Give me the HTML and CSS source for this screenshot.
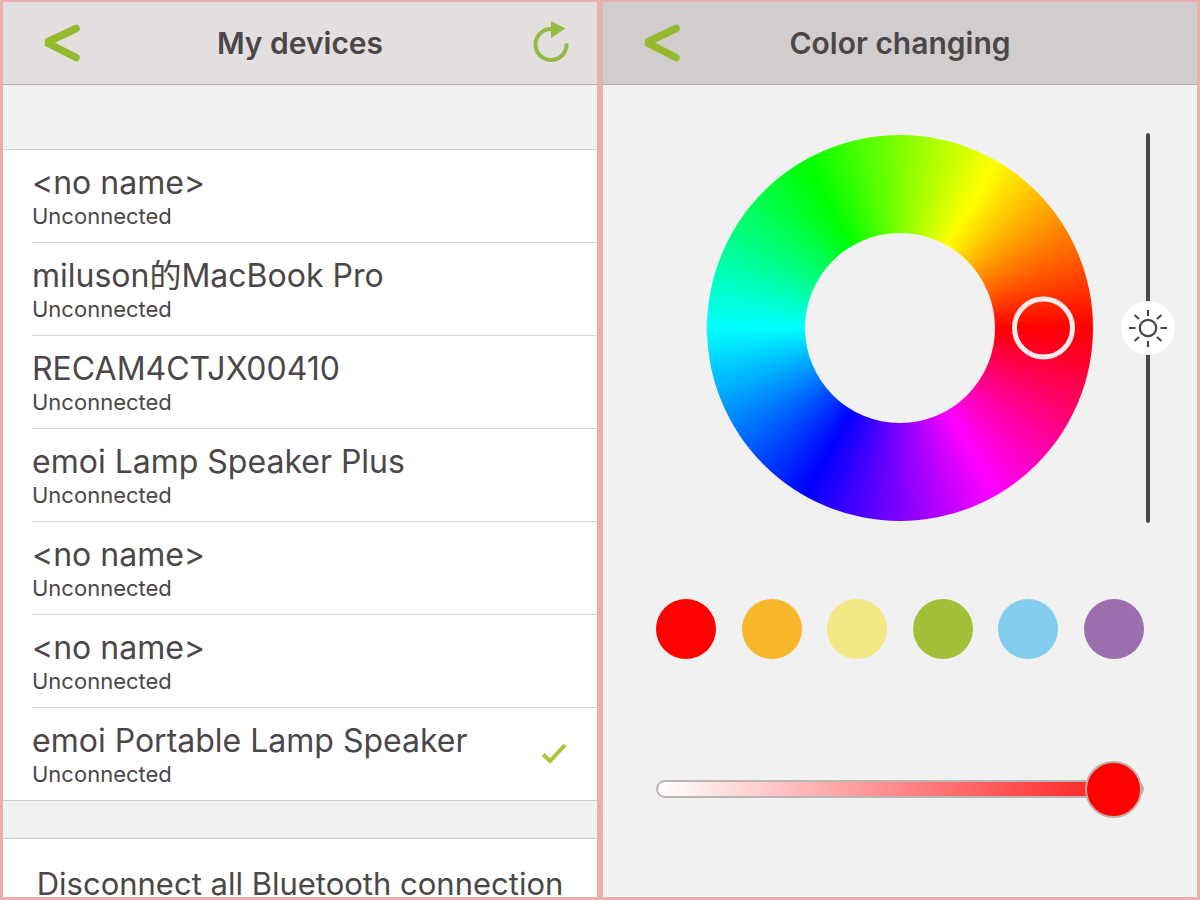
FILE: index.html
```
<!DOCTYPE html>
<html lang="en">
<head>
    <meta charset="UTF-8">
    <meta name="viewport" content="width=device-width, initial-scale=1.0">
    <title>Lamp Speaker - Devices and Color</title>
    <link rel="stylesheet" href="styles.css">
</head>
<body>

<!-- Devices Screen -->
<section class="screen">
    <header class="topbar">
        <button class="icon-btn" aria-label="Back">
            <svg width="38" height="38" viewBox="0 0 38 38"><path d="M34 4.500 L4.500 18.500 L34 33.500" fill="none" stroke="#95b92d" stroke-width="7.500" stroke-linecap="round" stroke-linejoin="bevel"/></svg>
        </button>
        <h1>My devices</h1>
        <button class="icon-btn" aria-label="Refresh">
            <svg width="38" height="42" viewBox="0 0 38 42"><path d="M34.5 21.5 A15.5 15.5 0 1 1 19 7" fill="none" stroke="#93ba45" stroke-width="4"/><path d="M19 -1 L33.5 6.5 L19 16 Z" fill="#93ba45"/></svg>
        </button>
    </header>

    <ul class="device-list">
        <li><button class="device"><span class="name">&lt;no name&gt;</span><span class="status">Unconnected</span></button></li>
        <li><button class="device"><span class="name">miluson的MacBook Pro</span><span class="status">Unconnected</span></button></li>
        <li><button class="device"><span class="name">RECAM4CTJX00410</span><span class="status">Unconnected</span></button></li>
        <li><button class="device"><span class="name">emoi Lamp Speaker Plus</span><span class="status">Unconnected</span></button></li>
        <li><button class="device"><span class="name">&lt;no name&gt;</span><span class="status">Unconnected</span></button></li>
        <li><button class="device"><span class="name">&lt;no name&gt;</span><span class="status">Unconnected</span></button></li>
        <li>
            <button class="device"><span class="name">emoi Portable Lamp Speaker</span><span class="status">Unconnected</span></button>
            <svg class="check" width="26" height="24" viewBox="0 0 26 24"><path d="M2 12.5 L9 19 L24 3" fill="none" stroke="#a9c53b" stroke-width="4"/></svg>
        </li>
    </ul>

    <button class="disconnect">Disconnect all Bluetooth connection</button>
</section>

<!-- Color Screen -->
<section class="screen">
    <header class="topbar dark">
        <button class="icon-btn" aria-label="Back">
            <svg width="38" height="38" viewBox="0 0 38 38"><path d="M34 4.500 L4.500 18.500 L34 33.500" fill="none" stroke="#95b92d" stroke-width="7.500" stroke-linecap="round" stroke-linejoin="bevel"/></svg>
        </button>
        <h1>Color changing</h1>
    </header>

    <div class="picker">
        <div class="wheel">
            <div class="wheel-hole"></div>
            <button class="wheel-handle" aria-label="Selected hue"></button>
        </div>
        <input type="range" class="brightness" min="0" max="100" value="50" aria-label="Brightness">
    </div>

    <div class="swatches">
        <button class="swatch red" aria-label="Red"></button>
        <button class="swatch orange" aria-label="Orange"></button>
        <button class="swatch yellow" aria-label="Yellow"></button>
        <button class="swatch green" aria-label="Green"></button>
        <button class="swatch blue" aria-label="Blue"></button>
        <button class="swatch purple" aria-label="Purple"></button>
    </div>

    <input type="range" class="saturation" min="0" max="100" value="100" aria-label="Saturation">
</section>

</body>
</html>
```
FILE: styles.css
```
* {
    box-sizing: border-box;
}

body {
    margin: 0;
    height: 100vh;
    padding: 2px 3px 3px;
    display: grid;
    grid-template-columns: 1fr 1fr;
    gap: 6px;
    background-color: #e9afab;
    color: #4b4748;
    font-family: Inter, "Noto Sans CJK SC", sans-serif;
}

button {
    border: none;
    padding: 0;
    background: none;
    color: inherit;
    font-family: inherit;
    cursor: pointer;
}

.screen {
    min-width: 0;
    overflow: hidden;
    background-color: #f1f1f1;
}

/* Top bar */
.topbar {
    display: grid;
    grid-template-columns: 40px 1fr 40px;
    align-items: center;
    height: 83px;
    padding: 0 26px 0 38px;
    border-bottom: 1px solid #b3adad;
    background-color: #e3dfde;
}

.topbar.dark {
    background-color: #d1cdcc;
}

.topbar h1 {
    margin: 0;
    padding-right: 12px;
    text-align: center;
    font-size: 30px;
    font-weight: 600;
    line-height: 40px;
}

.icon-btn {
    display: flex;
    justify-content: center;
}

.icon-btn svg {
    overflow: visible;
}

/* Device list */
.device-list {
    list-style: none;
    margin: 64px 0 0;
    padding: 0 0 0 29px;
    border-top: 1px solid #cfcfcf;
    border-bottom: 1px solid #cfcfcf;
    background-color: white;
}

.device-list li {
    display: flex;
    align-items: center;
    height: 93px;
    padding-right: 30px;
    border-bottom: 1px solid #d3d3d6;
}

.device-list li:last-child {
    height: 92px;
    border-bottom: none;
}

.device {
    flex: 1;
    text-align: left;
}

.name,
.status {
    display: block;
}

.name {
    font-size: 32px;
    line-height: 40px;
}

.status {
    font-size: 22px;
    line-height: 26px;
}

.disconnect {
    display: block;
    width: 100%;
    height: 91px;
    margin-top: 37px;
    border-top: 1px solid #cfcfcf;
    background-color: white;
    font-size: 31px;
    line-height: 40px;
    white-space: nowrap;
}

/* Color wheel */
.picker {
    display: grid;
    grid-template-columns: 1fr 386px 1fr;
    align-items: center;
    padding: 48px 22px 0;
}

.wheel {
    grid-column: 2;
    position: relative;
    display: grid;
    place-items: center;
    height: 386px;
    border-radius: 50%;
    background: conic-gradient(from 90deg, #f00, #f0f, #00f, #0ff, #0f0, #ff0, #f00);
}

.wheel-hole {
    width: 190px;
    height: 190px;
    border-radius: 50%;
    background-color: #f1f1f1;
}

.wheel-handle {
    position: absolute;
    top: 50%;
    right: 18px;
    width: 63px;
    height: 63px;
    border: 5px solid #ffe9e9;
    border-radius: 50%;
    transform: translateY(-50%);
}

/* Sliders */
input[type="range"] {
    -webkit-appearance: none;
    appearance: none;
    margin: 0;
    background: none;
    cursor: pointer;
}

input[type="range"]::-webkit-slider-thumb {
    -webkit-appearance: none;
    border-radius: 50%;
}

.brightness {
    justify-self: end;
    writing-mode: vertical-lr;
    direction: rtl;
    width: 54px;
    height: 390px;
}

.brightness::-webkit-slider-runnable-track {
    width: 4px;
    height: 100%;
    border-radius: 2px;
    background-color: #4b4748;
}

.brightness::-webkit-slider-thumb {
    width: 54px;
    height: 54px;
    margin-left: -25px;
    background: white url("data:image/svg+xml,%3Csvg xmlns='http://www.w3.org/2000/svg' viewBox='0 0 54 54' fill='none' stroke='%234b4748' stroke-width='2.2'%3E%3Ccircle cx='27' cy='27' r='8.2'/%3E%3Cpath d='M27 9v6M27 40v6M8 27h6.5M39.500 27h6.5M13.500 14l4.500 4M36 36l4.500 4M40.500 14l-4.500 4M18 36l-4.500 4'/%3E%3C/svg%3E") center no-repeat;
}

.saturation {
    display: block;
    width: calc(100% - 106px);
    height: 58px;
}

input.saturation {
    margin: 101px 53px 0;
}

.saturation::-webkit-slider-runnable-track {
    height: 18px;
    border: 2px solid #bbb5b5;
    border-radius: 9px;
    background: linear-gradient(to right, white, #f11);
}

.saturation::-webkit-slider-thumb {
    width: 57px;
    height: 57px;
    margin-top: -21px;
    border: 2px solid #c5a9a9;
    background-color: red;
}

/* Color presets */
.swatches {
    display: flex;
    justify-content: space-between;
    padding: 76px 53px 0;
}

.swatch {
    width: 60px;
    height: 60px;
    border-radius: 50%;
}

.red { background-color: #ff0000; }
.orange { background-color: #f8b62b; }
.yellow { background-color: #f4e885; }
.green { background-color: #a3bf3a; }
.blue { background-color: #82cdee; }
.purple { background-color: #9b6fae; }
```
